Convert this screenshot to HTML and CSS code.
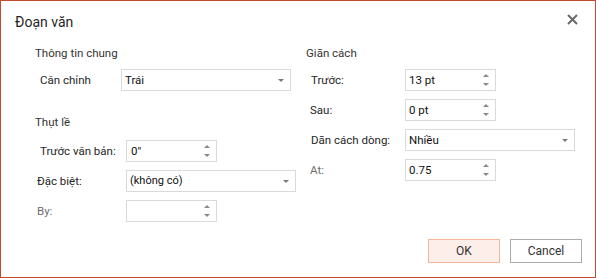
FILE: index.html
```html
<!DOCTYPE html>
<html lang="vi">
<head>
<meta charset="utf-8">
<title>Đoạn văn</title>
<link rel="stylesheet" href="styles.css">
</head>
<body>
<div class="dialog">
  <header class="titlebar">
    <h1 class="title">Đoạn văn</h1>
    <button class="close" aria-label="Đóng">
      <svg width="11" height="11" viewBox="0 0 11 11"><path d="M1 1 L10 10 M10 1 L1 10" stroke="#6a6a6a" stroke-width="2" fill="none"/></svg>
    </button>
  </header>
  <div class="body">
    <section class="col col-left">
      <h2 class="heading">Thông tin chung</h2>
      <div class="field field-first">
        <label class="lbl pad5">Căn chỉnh</label>
        <div class="box select"><span class="val">Trái</span><span class="caret"></span></div>
      </div>
      <h2 class="heading heading-2">Thụt lề</h2>
      <div class="field field-tight">
        <label class="lbl pad5">Trước văn bản:</label>
        <div class="box spin"><span class="val val-indent">0"</span><span class="arrows"><span class="up"></span><span class="down"></span></span></div>
      </div>
      <div class="field">
        <label class="lbl pad2">Đặc biệt:</label>
        <div class="box select"><span class="val val-sm">(không có)</span><span class="caret"></span></div>
      </div>
      <div class="field">
        <label class="lbl pad2 muted">By:</label>
        <div class="box spin"><span class="val"></span><span class="arrows"><span class="up"></span><span class="down"></span></span></div>
      </div>
    </section>
    <section class="col col-right">
      <h2 class="heading">Giãn cách</h2>
      <div class="field field-first">
        <label class="lbl pad5">Trước:</label>
        <div class="box spin"><span class="val">13 pt</span><span class="arrows"><span class="up"></span><span class="down"></span></span></div>
      </div>
      <div class="field">
        <label class="lbl pad4">Sau:</label>
        <div class="box spin"><span class="val">0 pt</span><span class="arrows"><span class="up"></span><span class="down"></span></span></div>
      </div>
      <div class="field">
        <label class="lbl pad5">Dãn cách dòng:</label>
        <div class="box select"><span class="val">Nhiều</span><span class="caret"></span></div>
      </div>
      <div class="field">
        <label class="lbl pad4 muted">At:</label>
        <div class="box spin"><span class="val">0.75</span><span class="arrows"><span class="up"></span><span class="down"></span></span></div>
      </div>
    </section>
  </div>
  <footer class="footer">
    <button class="btn btn-ok">OK</button>
    <button class="btn btn-cancel">Cancel</button>
  </footer>
</div>
</body>
</html>
```
FILE: styles.css
```css
* { box-sizing: border-box; }
html, body { margin: 0; padding: 0; background: #fff; }
body { font-family: Roboto, "Noto Sans", sans-serif; font-size: 11.5px; color: #262626; }

.dialog {
  width: 596px;
  height: 278px;
  border: 1px solid #bf4a2e;
  display: flex;
  flex-direction: column;
  background: #fff;
}

.titlebar {
  height: 44px;
  display: flex;
  justify-content: space-between;
  align-items: flex-start;
  padding: 11px 17px 0 14px;
}
.title {
  margin: 0;
  font-size: 14px;
  font-weight: normal;
  line-height: 20px;
  color: #1f1f1f;
}
.close {
  border: 0;
  background: none;
  padding: 0;
  margin-top: 2px;
  width: 11px;
  height: 11px;
  display: block;
}
.close svg { display: block; }

.body { display: flex; }
.col-left { width: 305px; padding-left: 34px; }
.col-right { flex: 1; }

.heading {
  margin: 0;
  font-size: 11.5px;
  font-weight: normal;
  line-height: 16px;
  color: #333;
}
.heading-2 { margin-top: 23px; }

.field {
  display: grid;
  grid-template-columns: 91px auto;
  align-items: center;
  height: 22px;
  margin-top: 8px;
}
.col-left .field-first { grid-template-columns: 86px auto; }
.col-left .field-tight { margin-top: 10px; }
.col-right .field { grid-template-columns: 99px auto; }

.lbl { line-height: 16px; }
.pad2 { padding-left: 2px; }
.pad4 { padding-left: 4px; }
.pad5 { padding-left: 5px; }
.muted { color: #6e6e6e; }

.box {
  height: 22px;
  border: 1px solid #dadada;
  display: flex;
  align-items: center;
  justify-content: space-between;
  background: #fff;
  color: #111;
}
.select { width: 170px; padding: 0 6px 0 3px; }
.spin { width: 91px; padding: 0 6px 0 3px; }
.val { line-height: 16px; }
.val-indent { padding-left: 1px; }
.val-sm { font-size: 11px; }

.caret {
  width: 0; height: 0;
  border-left: 3px solid transparent;
  border-right: 3px solid transparent;
  border-top: 3px solid #7a7a7a;
  margin-top: 1px;
}
.arrows {
  display: flex;
  flex-direction: column;
  gap: 6px;
  align-items: center;
}
.up, .down {
  width: 0; height: 0;
  border-left: 3px solid transparent;
  border-right: 3px solid transparent;
}
.up { border-bottom: 3px solid #8a8a8a; }
.down { border-top: 3px solid #8a8a8a; }

.footer {
  margin-top: auto;
  display: flex;
  justify-content: flex-end;
  gap: 10px;
  padding: 0 13px 14px 0;
}
.btn {
  width: 72px;
  height: 24px;
  font-family: inherit;
  font-size: 12px;
  color: #333;
  padding: 0;
}
.btn-ok { background: #fcefea; border: 1px solid #f3b59b; }
.btn-cancel { background: #fff; border: 1px solid #ababab; }
```
